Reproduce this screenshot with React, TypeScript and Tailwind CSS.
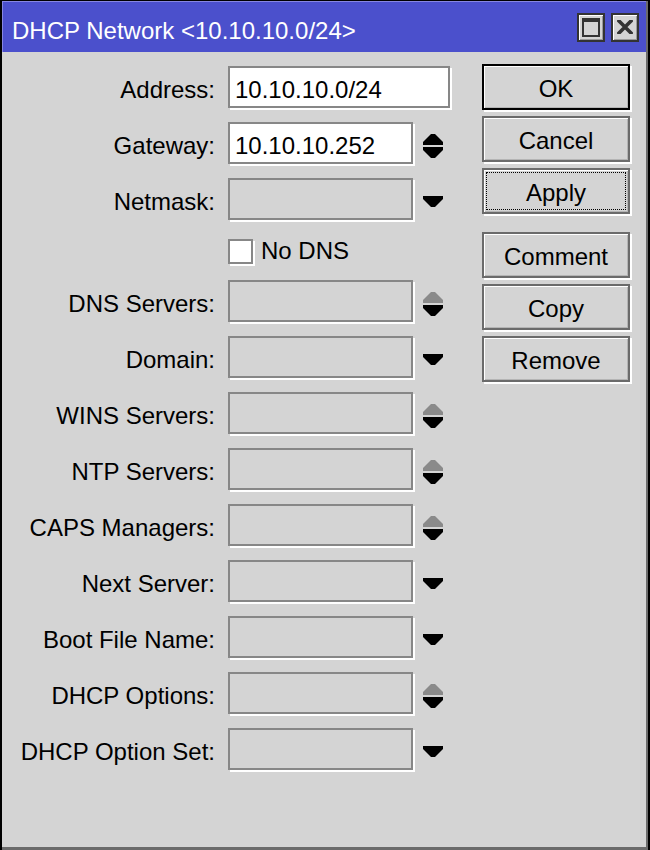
import React from "react";

const FONT = { fontFamily: '"Liberation Sans", Arial, sans-serif' };

function UpArrow({ color }: { color: string }) {
  return (
    <svg width="20" height="11" viewBox="0 0 20 11" className="block">
      <polygon points="8,0 12,0 20,8 20,11 0,11 0,8" fill={color} />
    </svg>
  );
}

function DownArrow({ color = "#000" }: { color?: string }) {
  return (
    <svg width="20" height="11" viewBox="0 0 20 11" className="block">
      <polygon points="0,0 20,0 20,3 12,11 8,11 0,3" fill={color} />
    </svg>
  );
}

type Kind = "spin" | "spinDis" | "drop" | "none";

function Row({
  label,
  value,
  kind,
  enabled,
  wide,
}: {
  label: string;
  value?: string;
  kind: Kind;
  enabled?: boolean;
  wide?: boolean;
}) {
  return (
    <div className="flex h-[42px] items-center">
      <div className="w-[213px] whitespace-nowrap pt-[5px] text-right text-[24px] text-black">
        {label}
      </div>
      <div
        className={`ml-[13px] flex h-[42px] items-center border-2 border-[#878787] pl-[5px] pt-[5px] text-[24px] text-black shadow-[2px_2px_0_#ffffff] ${
          wide ? "w-[222px]" : "w-[185px]"
        } ${enabled ? "bg-white" : "bg-[#d4d4d4]"}`}
      >
        {value}
      </div>
      {kind !== "none" && (
        <div className="flex w-[40px] justify-center">
          {kind === "drop" ? (
            <div className="mt-[4px]">
              <DownArrow />
            </div>
          ) : (
            <div className="mt-[6px] flex flex-col gap-[2px]">
              <UpArrow color={kind === "spin" ? "#000" : "#8a8a8a"} />
              <DownArrow />
            </div>
          )}
        </div>
      )}
    </div>
  );
}

function Btn({
  children,
  def,
  focus,
  className = "",
}: {
  children: React.ReactNode;
  def?: boolean;
  focus?: boolean;
  className?: string;
}) {
  return (
    <div
      className={`flex h-[46px] w-[148px] items-center justify-center border-2 bg-[#d4d4d4] p-[2px] text-[24px] text-black shadow-[2px_2px_0_#ffffff,inset_1px_1px_0_#ffffff,inset_-1px_-1px_0_#b4b4b4] ${
        def ? "border-black" : "border-[#6b6b6b]"
      } ${className}`}
    >
      <div
        className={`flex h-full w-full items-center justify-center pt-[3px] ${
          focus ? "border border-dotted border-black" : ""
        }`}
      >
        {children}
      </div>
    </div>
  );
}

export default function App() {
  return (
    <div
      className="h-[850px] w-[650px] bg-black pl-[2px] pr-[2px] pt-[1px]"
      style={FONT}
    >
      <div className="flex h-full flex-col border-b-[3px] border-r-2 border-[#6b6b6b] bg-[#d4d4d4]">
        {/* Title bar */}
        <div className="flex h-[51px] shrink-0 items-center justify-between border-l border-t border-[#8686e2] bg-[#4b50cc] pl-[9px] pr-[7px]">
          <span className="whitespace-nowrap pt-[8px] text-[24px] text-white">
            DHCP Network &lt;10.10.10.0/24&gt;
          </span>
          <div className="flex gap-[6px]">
            <div className="flex h-[29px] w-[28px] items-center justify-center border-2 border-[#333333] bg-[#d4d4d4] shadow-[inset_1px_1px_0_#ffffff,inset_-1px_-1px_0_#9a9a9a]">
              <div className="h-[19px] w-[18px] border-2 border-t-[4px] border-[#333333] bg-[#d4d4d4]" />
            </div>
            <div className="flex h-[29px] w-[28px] items-center justify-center border-2 border-[#333333] bg-[#d4d4d4] shadow-[inset_1px_1px_0_#ffffff,inset_-1px_-1px_0_#9a9a9a]">
              <svg width="16" height="14" viewBox="0 0 16 14" className="block">
                <path
                  d="M2 1 L14 13 M14 1 L2 13"
                  stroke="#333333"
                  strokeWidth="3.6"
                  strokeLinecap="square"
                />
              </svg>
            </div>
          </div>
        </div>

        {/* Body */}
        <div className="flex">
          <div className="flex w-[480px] flex-col gap-[14px] pt-[14px]">
            <Row label="Address:" value="10.10.10.0/24" kind="none" enabled wide />
            <Row label="Gateway:" value="10.10.10.252" kind="spin" enabled />
            <Row label="Netmask:" kind="drop" />
            <div className="flex h-[32px] items-center pl-[226px]">
              <div className="mt-[3px] h-[25px] w-[25px] border-2 border-[#878787] bg-white shadow-[2px_2px_0_#ffffff]" />
              <span className="ml-[8px] pt-[2px] text-[24px] text-black">No DNS</span>
            </div>
            <Row label="DNS Servers:" kind="spinDis" />
            <Row label="Domain:" kind="drop" />
            <Row label="WINS Servers:" kind="spinDis" />
            <Row label="NTP Servers:" kind="spinDis" />
            <Row label="CAPS Managers:" kind="spinDis" />
            <Row label="Next Server:" kind="drop" />
            <Row label="Boot File Name:" kind="drop" />
            <Row label="DHCP Options:" kind="spinDis" />
            <Row label="DHCP Option Set:" kind="drop" />
          </div>
          <div className="flex w-[148px] flex-col pt-[12px]">
            <Btn def>OK</Btn>
            <Btn className="mt-[6px]">Cancel</Btn>
            <Btn className="mt-[6px]" focus>
              Apply
            </Btn>
            <Btn className="mt-[18px]">Comment</Btn>
            <Btn className="mt-[6px]">Copy</Btn>
            <Btn className="mt-[6px]">Remove</Btn>
          </div>
        </div>
      </div>
    </div>
  );
}
